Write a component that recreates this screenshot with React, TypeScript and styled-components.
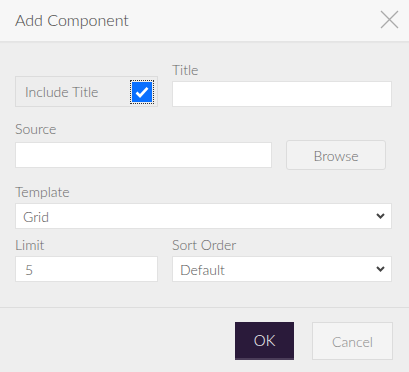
import React, { useState } from 'react'
import styled, { createGlobalStyle } from 'styled-components'

const GlobalStyle = createGlobalStyle`
  html, body {
    margin: 0;
    padding: 0;
    background: #eeeeee;
  }
  body {
    font-family: Lato, "Open Sans", "Liberation Sans", sans-serif;
    font-weight: 300;
    color: #666;
  }
  * { box-sizing: border-box; }
`

const Chevron = () => (
  <svg width="9" height="6" viewBox="0 0 9 6">
    <path d="M1 1 L4.5 4.5 L8 1" fill="none" stroke="#444" strokeWidth="2" />
  </svg>
)

export default function App() {
  const [includeTitle, setIncludeTitle] = useState(true)

  return (
    <Dialog>
      <GlobalStyle />
      <Header>
        <HeaderTitle>Add Component</HeaderTitle>
        <CloseButton aria-label="Close">
          <svg width="19" height="19" viewBox="0 0 19 19">
            <path d="M1 1 L18 18 M18 1 L1 18" stroke="#aaa" strokeWidth="1.3" />
          </svg>
        </CloseButton>
      </Header>

      <Body>
        <SplitRow>
          <IncludeBox onClick={() => setIncludeTitle(!includeTitle)}>
            Include Title
            <CheckBox checked={includeTitle}>
              {includeTitle && (
                <svg width="14" height="12" viewBox="0 0 14 12">
                  <path d="M1.5 6.5 L5 10 L12.5 1.8" fill="none" stroke="#fff" strokeWidth="2.6" />
                </svg>
              )}
            </CheckBox>
          </IncludeBox>
          <Field>
            <Label>Title</Label>
            <TextInput />
          </Field>
        </SplitRow>

        <Field $top={14}>
          <Label>Source</Label>
          <SourceRow>
            <TextInput />
            <GreyButton>Browse</GreyButton>
          </SourceRow>
        </Field>

        <Field $top={14}>
          <Label>Template</Label>
          <SelectBox>
            <span>Grid</span>
            <Chevron />
          </SelectBox>
        </Field>

        <SplitRow $top={8}>
          <Field>
            <Label>Limit</Label>
            <TextInput defaultValue="5" />
          </Field>
          <Field>
            <Label>Sort Order</Label>
            <SelectBox>
              <span>Default</span>
              <Chevron />
            </SelectBox>
          </Field>
        </SplitRow>
      </Body>

      <Footer>
        <PrimaryButton>OK</PrimaryButton>
        <CancelButton>Cancel</CancelButton>
      </Footer>
    </Dialog>
  )
}

const Dialog = styled.div`
  width: 409px;
  height: 372px;
  background: #eeeeee;
  display: flex;
  flex-direction: column;
`

const Header = styled.div`
  height: 42px;
  background: #f7f7f7;
  border-bottom: 1px solid #e4e4e4;
  box-shadow: 0 1px 1px rgba(0, 0, 0, 0.03);
  display: flex;
  align-items: center;
  justify-content: space-between;
  padding: 0 10px 0 15px;
`

const HeaderTitle = styled.h1`
  margin: 0;
  font-size: 16px;
  font-weight: 300;
  color: #444;
  margin-top: -2px;
`

const CloseButton = styled.button`
  border: none;
  background: none;
  padding: 0;
  display: flex;
  margin-top: -2px;
`

const Body = styled.div`
  padding: 20px 17px 25px 15px;
  display: flex;
  flex-direction: column;
  border-bottom: 1px solid #dddddd;
`

const SplitRow = styled.div<{ $top?: number }>`
  display: grid;
  grid-template-columns: 143px 1fr;
  column-gap: 14px;
  align-items: end;
  margin-top: ${p => p.$top ?? 0}px;
`

const Field = styled.div<{ $top?: number }>`
  display: flex;
  flex-direction: column;
  margin-top: ${p => p.$top ?? 0}px;
`

const Label = styled.label`
  font-size: 14px;
  line-height: 16px;
  color: #666;
  margin-bottom: 3px;
`

const TextInput = styled.input`
  height: 26px;
  width: 100%;
  border: 1px solid #e2e2e2;
  background: #fff;
  font-family: inherit;
  font-weight: 300;
  font-size: 14px;
  color: #555;
  padding: 0 9px;
  outline: none;
`

const IncludeBox = styled.div`
  height: 31px;
  border: 1px solid #dcdcdc;
  background: #ededed;
  display: flex;
  align-items: center;
  justify-content: space-between;
  padding: 0 4px 0 9px;
  font-size: 14px;
  color: #666;
  cursor: pointer;
`

const CheckBox = styled.span<{ checked: boolean }>`
  width: 20px;
  height: 20px;
  display: flex;
  align-items: center;
  justify-content: center;
  background: ${p => (p.checked ? '#0a70ff' : '#fff')};
  border: 1px solid ${p => (p.checked ? '#0a70ff' : '#999')};
  outline: 1px dotted #333;
  outline-offset: 1px;
  margin-right: 1px;
`

const SourceRow = styled.div`
  display: grid;
  grid-template-columns: 257px 100px;
  column-gap: 14px;
  align-items: center;
`

const GreyButton = styled.button`
  height: 30px;
  border: 1px solid #dcdcdc;
  border-radius: 3px;
  background: #f2f2f2;
  font-family: inherit;
  font-weight: 300;
  font-size: 14px;
  color: #666;
`

const SelectBox = styled.div`
  height: 26px;
  border: 1px solid #e2e2e2;
  background: #fff;
  display: flex;
  align-items: center;
  justify-content: space-between;
  padding: 0 6px 0 7px;
  font-size: 14px;
  color: #555;
`

const Footer = styled.div`
  flex: 1;
  display: flex;
  justify-content: flex-end;
  align-items: flex-start;
  gap: 18px;
  padding: 14px 16px 0 0;
`

const PrimaryButton = styled.button`
  width: 59px;
  height: 38px;
  border: none;
  border-bottom: 2px solid #4b3d59;
  background: #2a1a3a;
  color: #fff;
  font-family: inherit;
  font-weight: 300;
  font-size: 15px;
`

const CancelButton = styled.button`
  width: 81px;
  height: 38px;
  border: 1px solid #dcdcdc;
  background: #f4f4f4;
  color: #888;
  font-family: inherit;
  font-weight: 300;
  font-size: 14px;
`
